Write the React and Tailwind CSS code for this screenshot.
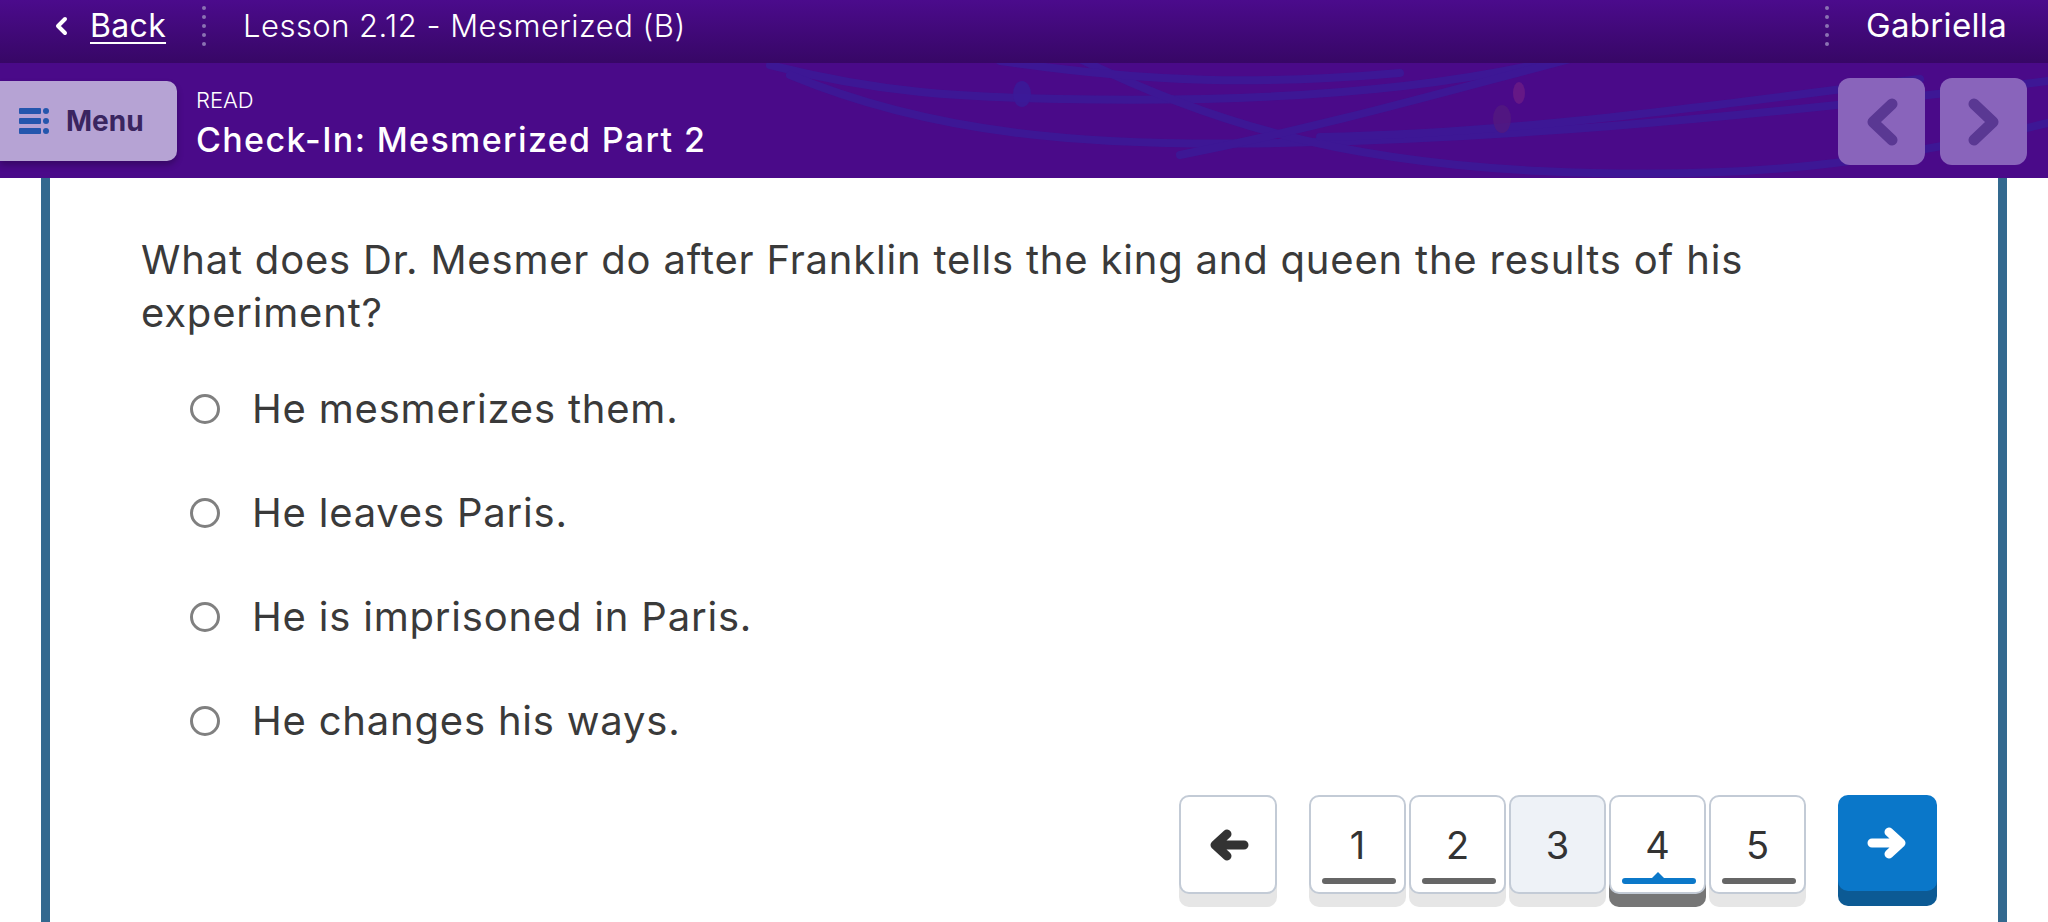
import React from "react";

const options = [
  "He mesmerizes them.",
  "He leaves Paris.",
  "He is imprisoned in Paris.",
  "He changes his ways.",
];

function Dots() {
  return (
    <div className="flex flex-col gap-[5px] py-[2px]">
      {[0, 1, 2, 3, 4].map((i) => (
        <span key={i} className="block h-[4px] w-[4px] rounded-full bg-[#8b72b3]" />
      ))}
    </div>
  );
}

function MenuIcon() {
  return (
    <svg width="30" height="26" viewBox="0 0 30 26" fill="#2456ad">
      <rect x="0" y="0" width="22" height="6" rx="1" />
      <rect x="0" y="10" width="22" height="6" rx="1" />
      <rect x="0" y="20" width="22" height="6" rx="1" />
      <circle cx="27" cy="3" r="3" />
      <circle cx="27" cy="13" r="3" />
      <circle cx="27" cy="23" r="3" />
    </svg>
  );
}

function Chevron({ dir }) {
  return (
    <svg width="36" height="50" viewBox="0 0 36 50" fill="none">
      <path
        d={dir === "left" ? "M28 7 L9 25 L28 43" : "M8 7 L27 25 L8 43"}
        stroke="#5a3893"
        strokeWidth="11"
        strokeLinecap="round"
        strokeLinejoin="round"
      />
    </svg>
  );
}

function Arrow({ dir, color }) {
  return (
    <svg width="41" height="34" viewBox="0 0 41 34" fill="none">
      <path
        d={dir === "left" ? "M36 17 H12 M19 6 L7 17 L19 28" : "M5 17 H29 M22 6 L34 17 L22 28"}
        stroke={color}
        strokeWidth="9"
        strokeLinecap="round"
        strokeLinejoin="round"
      />
    </svg>
  );
}

function Swirls() {
  return (
    <svg
      className="pointer-events-none absolute inset-0 h-full w-full"
      viewBox="0 0 2048 115"
      preserveAspectRatio="none"
      fill="none"
    >
      <g stroke="#3b1a98" strokeWidth="8" strokeLinecap="round" opacity="0.85">
        <path d="M770 2 C 880 30, 960 34, 1060 36 S 1380 40, 1560 -4" />
        <path d="M790 12 C 930 70, 1080 84, 1280 80 S 1700 60, 2048 18" />
        <path d="M1080 -4 C 1200 55, 1330 98, 1540 108 S 1880 100, 2048 60" />
        <path d="M1180 92 C 1330 62, 1440 30, 1570 -4" />
        <path d="M1320 74 C 1520 70, 1700 44, 1920 16" />
        <path d="M1000 -2 C 1150 20, 1260 22, 1400 10" />
      </g>
      <ellipse cx="1022" cy="31" rx="9" ry="13" fill="#3b1a98" opacity="0.9" />
      <ellipse cx="1519" cy="30" rx="6" ry="11" fill="#6b1c86" opacity="0.8" />
      <ellipse cx="1502" cy="56" rx="9" ry="14" fill="#52197f" opacity="0.8" />
    </svg>
  );
}

function PageButton({ n, state }) {
  const current = state === "current";
  const visited = state === "visited";
  return (
    <div
      className={
        "relative flex h-[99px] w-[97px] items-center justify-center rounded-[10px] border-2 border-[#c3cbd6] " +
        (visited ? "bg-[#eef2f7] " : "bg-white ") +
        (current ? "shadow-[0_13px_0_#767676]" : "shadow-[0_13px_0_#e6e6e6]")
      }
    >
      <span className="text-[38px] leading-none text-[#333]">{n}</span>
      {!visited && (
        <span
          className={
            "absolute bottom-[8px] left-[11px] right-[8px] h-[6px] rounded-full " +
            (current ? "bg-[#0b78c9]" : "bg-[#666]")
          }
        />
      )}
      {current && (
        <span className="absolute bottom-[13px] left-1/2 h-0 w-0 -translate-x-1/2 border-x-[7px] border-b-[7px] border-x-transparent border-b-[#0b78c9]" />
      )}
    </div>
  );
}

export default function App() {
  return (
    <div className="flex h-[922px] w-[2048px] flex-col overflow-hidden bg-white font-[Inter,sans-serif]">
      <header className="flex h-[63px] shrink-0 items-center bg-linear-to-b from-[#4b0b8c] to-[#370766] pb-[12px] text-white">
        <svg className="ml-[53px]" width="16" height="22" viewBox="0 0 16 22" fill="none">
          <path d="M12 4 L5 11 L12 18" stroke="white" strokeWidth="4" strokeLinecap="round" strokeLinejoin="round" />
        </svg>
        <a href="#" className="ml-[21px] text-[32px] leading-none tracking-[0.01em] underline underline-offset-[5px] decoration-[2px]">
          Back
        </a>
        <div className="ml-[36px]">
          <Dots />
        </div>
        <span className="ml-[37px] text-[31px] font-light leading-none tracking-[0.015em]">
          Lesson 2.12 - Mesmerized (B)
        </span>
        <div className="ml-auto">
          <Dots />
        </div>
        <span className="ml-[37px] mr-[41px] text-[33px] leading-none tracking-[0.01em]">Gabriella</span>
      </header>

      <div className="relative flex h-[115px] shrink-0 items-start bg-[#4a0a89]">
        <Swirls />
        <button className="relative mt-[18px] flex h-[80px] w-[177px] items-center gap-[17px] rounded-r-[10px] bg-[#b6a3d4] pl-[19px] shadow-[0_4px_6px_rgba(0,0,0,0.25)]">
          <MenuIcon />
          <span className="text-[28px] font-bold text-[#3a2560]">Menu</span>
        </button>
        <div className="relative ml-[19px] mt-[23px] flex flex-col text-white">
          <span className="text-[22px] font-light leading-[28px]">READ</span>
          <span className="mt-[6px] text-[34px] font-medium leading-[40px] tracking-[0.04em]">Check-In: Mesmerized Part 2</span>
        </div>
        <div className="relative ml-auto mr-[21px] mt-[15px] flex gap-[15px]">
          <button className="flex h-[87px] w-[87px] items-center justify-center rounded-[12px] bg-[#8964bb]">
            <Chevron dir="left" />
          </button>
          <button className="flex h-[87px] w-[87px] items-center justify-center rounded-[12px] bg-[#8964bb]">
            <Chevron dir="right" />
          </button>
        </div>
      </div>

      <main className="mx-[41px] flex flex-1 flex-col border-x-[9px] border-[#33698f] pl-[91px] pr-[61px] pt-[55px] text-[#3a3a3a]">
        <p className="text-[40px] leading-[53px] tracking-[0.02em]">
          What does Dr. Mesmer do after Franklin tells the king and queen the results of his
          <br />
          experiment?
        </p>
        <div className="mt-[18px] flex flex-col pl-[49px]">
          {options.map((o) => (
            <label key={o} className="flex h-[104px] items-center gap-[32px]">
              <span className="h-[30px] w-[30px] shrink-0 rounded-full border-[3px] border-[#808080]" />
              <span className="text-[40px] leading-none tracking-[0.02em]">{o}</span>
            </label>
          ))}
        </div>
        <div className="mt-[22px] flex justify-end">
          <button className="flex h-[99px] w-[98px] items-center justify-center rounded-[10px] border-2 border-[#c3cbd6] bg-white shadow-[0_13px_0_#e6e6e6]">
            <Arrow dir="left" color="#333" />
          </button>
          <div className="ml-[32px] flex gap-[3px]">
            <PageButton n="1" state="done" />
            <PageButton n="2" state="done" />
            <PageButton n="3" state="visited" />
            <PageButton n="4" state="current" />
            <PageButton n="5" state="done" />
          </div>
          <button className="ml-[32px] flex h-[96px] w-[99px] items-center justify-center rounded-[10px] bg-[#0a77c9] shadow-[0_15px_0_#0c5a94]">
            <Arrow dir="right" color="white" />
          </button>
        </div>
      </main>
    </div>
  );
}
